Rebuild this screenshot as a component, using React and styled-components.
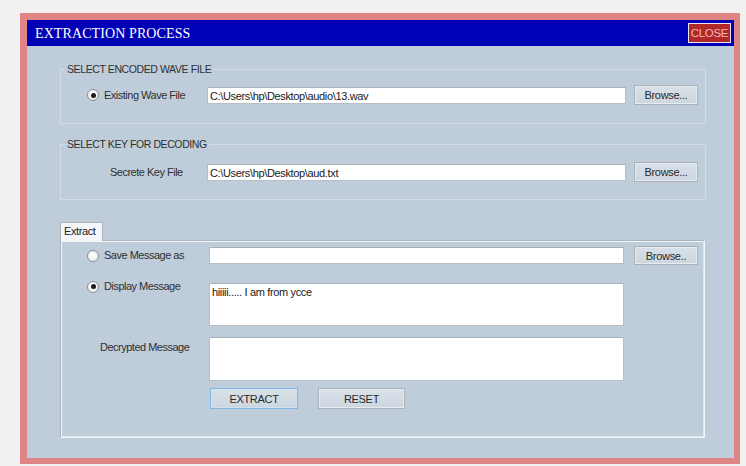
import React from "react";
import styled, { createGlobalStyle } from "styled-components";

const Global = createGlobalStyle`
  html, body { margin: 0; padding: 0; background: #f1f1f1; }
  body { font-family: "Liberation Sans", Arial, sans-serif; }
  * { box-sizing: border-box; }
`;

const Window = styled.div`
  margin: 13px 0 0 20px;
  width: 720px;
  height: 451px;
  border: 7px solid #df8585;
  border-right-width: 6px;
  border-bottom-width: 6px;
  background: #bfcdda;
  display: flex;
  flex-direction: column;
`;

const TitleBar = styled.div`
  height: 26px;
  background: #0000b6;
  display: flex;
  align-items: center;
  justify-content: space-between;
  padding: 0 3px 0 8px;
`;

const Title = styled.div`
  font-family: "Liberation Serif", "Times New Roman", serif;
  font-size: 14px;
  color: #ffffff;
  letter-spacing: 0.1px;
  padding-top: 1px;
`;

const CloseButton = styled.button`
  width: 43px;
  height: 20px;
  padding: 0;
  background: #b02828;
  border: 1px solid #ece6f2;
  color: #f4b9b9;
  font-family: "Liberation Sans", Arial, sans-serif;
  font-size: 11.5px;
  letter-spacing: -0.3px;
`;

const Content = styled.div`
  flex: 1;
  padding: 17px 28px 0 33px;
  display: flex;
  flex-direction: column;
`;

const Group = styled.fieldset`
  margin: ${(p) => p.$top || 0}px 0 0 0;
  border: 1px solid #d2dce5;
  padding: 0;
  min-width: 0;
`;

const Legend = styled.legend`
  font-size: 10.5px;
  line-height: 13px;
  color: #303030;
  padding: 0 2px;
  margin-left: 4px;
  letter-spacing: -0.4px;
`;

const GroupBody = styled.div`
  padding: ${(p) => p.$pt}px 0 ${(p) => p.$pb}px 26px;
`;

const Row = styled.div`
  display: grid;
  grid-template-columns: ${(p) => p.$cols};
  column-gap: ${(p) => p.$gap ?? 8}px;
  align-items: ${(p) => p.$align || "center"};
  margin-top: ${(p) => p.$mt || 0}px;
`;

const Label = styled.div`
  display: flex;
  align-items: center;
  gap: 5px;
  font-size: 11px;
  line-height: 13px;
  color: #303030;
  letter-spacing: -0.5px;
  white-space: nowrap;
  padding-left: ${(p) => p.$indent || 0}px;
  margin-top: ${(p) => p.$mt || 0}px;
`;

const Radio = styled.span`
  width: 12px;
  height: 12px;
  border-radius: 50%;
  border: 1px solid #8a8f96;
  background: radial-gradient(circle at 40% 35%, #ffffff 0%, #e3e7eb 100%);
  display: inline-flex;
  align-items: center;
  justify-content: center;
  flex: none;
  &::after {
    content: "";
    width: 5px;
    height: 5px;
    border-radius: 50%;
    background: ${(p) => (p.$checked ? "#1c1c1c" : "transparent")};
  }
`;

const Field = styled.div`
  height: ${(p) => p.$h || 17}px;
  background: #ffffff;
  border: 1px solid #b7bec6;
  border-top-color: #a8b0b8;
  font-size: 11px;
  line-height: 14px;
  color: #202020;
  padding: 1px 2px;
  letter-spacing: -0.35px;
  white-space: pre;
  margin-top: ${(p) => p.$mt || 0}px;
`;

const Button = styled.button`
  width: ${(p) => p.$w || 64}px;
  height: ${(p) => p.$h || 20}px;
  padding: 0;
  background: linear-gradient(#d8e0e8, #cdd6df);
  border: 1px solid ${(p) => (p.$focus ? "#84b6e6" : "#a9b2bb")};
  box-shadow: inset 0 0 0 1px ${(p) => (p.$focus ? "#cfe2f3" : "#e6ebf0")};
  font-family: "Liberation Sans", Arial, sans-serif;
  font-size: 11px;
  color: #2a2a2a;
  letter-spacing: -0.3px;
`;

const Tabs = styled.div`
  margin-top: 22px;
  display: flex;
  flex-direction: column;
  margin-right: 1px;
`;

const TabStrip = styled.div`
  display: flex;
`;

const Tab = styled.div`
  width: 43px;
  height: 19px;
  background: #f4f6f8;
  border: 1px solid #aab5c0;
  border-bottom: none;
  font-size: 11px;
  line-height: 17px;
  padding-left: 3px;
  color: #222;
  letter-spacing: -0.4px;
  position: relative;
  z-index: 1;
  margin-bottom: -1px;
`;

const Panel = styled.div`
  border: 1px solid #aab5c0;
  border-right-color: #f2f6f9;
  border-bottom-color: #f2f6f9;
  box-shadow: inset -1px -1px 0 #dfe7ee, inset 1px 1px 0 #f2f6f9;
  padding: 5px 0 28px 26px;
  display: flex;
  flex-direction: column;
`;

const ButtonRow = styled.div`
  display: flex;
  gap: 20px;
  margin: 7px 0 0 123px;
`;

export default function App() {
  return (
    <>
      <Global />
      <Window>
        <TitleBar>
          <Title>EXTRACTION PROCESS</Title>
          <CloseButton>CLOSE</CloseButton>
        </TitleBar>
        <Content>
          <Group>
            <Legend>SELECT ENCODED WAVE FILE</Legend>
            <GroupBody $pt={9} $pb={18}>
              <Row $cols="112px 419px 64px">
                <Label>
                  <Radio $checked />
                  Existing Wave File
                </Label>
                <Field>C:\Users\hp\Desktop\audio\13.wav</Field>
                <Button>Browse...</Button>
              </Row>
            </GroupBody>
          </Group>

          <Group $top={14}>
            <Legend>SELECT KEY FOR DECODING</Legend>
            <GroupBody $pt={11} $pb={17}>
              <Row $cols="112px 419px 64px">
                <Label $indent={23}>Secrete Key File</Label>
                <Field>C:\Users\hp\Desktop\aud.txt</Field>
                <Button>Browse...</Button>
              </Row>
            </GroupBody>
          </Group>

          <Tabs>
            <TabStrip>
              <Tab>Extract</Tab>
            </TabStrip>
            <Panel>
              <Row $cols="112px 415px 66px" $gap={10}>
                <Label>
                  <Radio />
                  Save Message as
                </Label>
                <Field />
                <Button $h={19}>Browse..</Button>
              </Row>
              <Row $cols="122px 415px" $gap={0} $align="start" $mt={15}>
                <Label>
                  <Radio $checked />
                  Display Message
                </Label>
                <Field $h={43} $mt={3}>hiiiii..... I am from ycce</Field>
              </Row>
              <Row $cols="122px 415px" $gap={0} $align="start" $mt={11}>
                <Label $indent={13} $mt={4}>Decrypted Message</Label>
                <Field $h={44} />
              </Row>
              <ButtonRow>
                <Button $w={88} $h={21} $focus>EXTRACT</Button>
                <Button $w={87} $h={21}>RESET</Button>
              </ButtonRow>
            </Panel>
          </Tabs>
        </Content>
      </Window>
    </>
  );
}
